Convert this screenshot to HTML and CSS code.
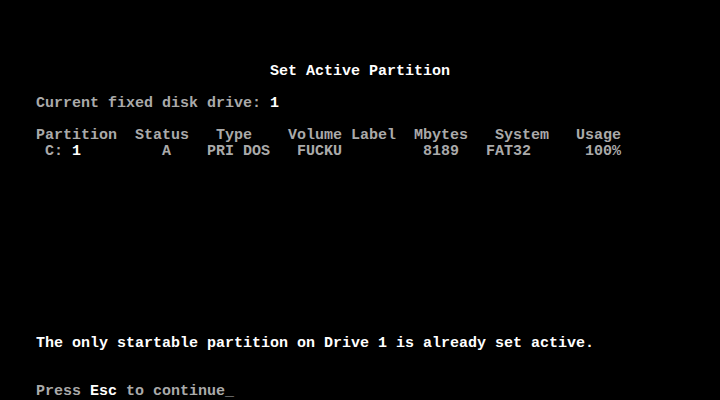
FILE: index.html
```html
<!DOCTYPE html>
<html lang="en">
<head>
    <meta charset="UTF-8">
    <meta name="viewport" content="width=device-width, initial-scale=1.0">
    <link rel="stylesheet" href="styles.css">
    <title>FDISK - Set Active Partition</title>
</head>
<body>
    <div class="screen">
<pre class="console">




                              <span class="hi">Set Active Partition</span>

    Current fixed disk drive: <span class="hi">1</span>

    Partition  Status   Type    Volume Label  Mbytes   System   Usage
     C: <span class="hi">1</span>         A    PRI DOS   FUCKU         8189   FAT32      100%











    <span class="hi">The only startable partition on Drive 1 is already set active.</span>


    Press <span class="hi">Esc</span> to continue<span class="cursor">_</span></pre>
    </div>
</body>
</html>
```

FILE: styles.css
```css
html, body {
    margin: 0;
    padding: 0;
    background-color: #000;
}

.screen {
    width: 720px;
    height: 400px;
    overflow: hidden;
    background-color: #000;
}

.console {
    margin: 0;
    font-family: "Liberation Mono", "DejaVu Sans Mono", monospace;
    font-size: 15px;
    font-weight: bold;
    line-height: 16px;
    color: #aaa;
    white-space: pre;
}

.hi {
    color: #fff;
}

.cursor {
    color: #aaa;
}
```
